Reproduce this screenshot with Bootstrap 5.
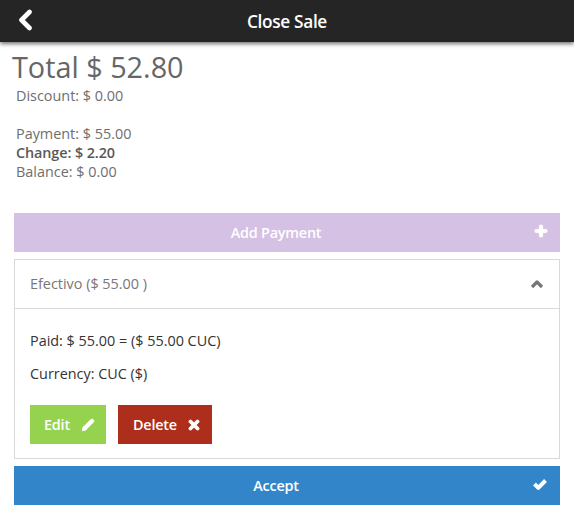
<!DOCTYPE html>
<html lang="en">
<head>
<meta charset="utf-8">
<title>Close Sale</title>
<link rel="stylesheet" href="https://cdn.jsdelivr.net/npm/bootstrap@5.3.0/dist/css/bootstrap.min.css">
<style>
html,body{height:512px;overflow:hidden}
body{font-family:"Open Sans","Noto Sans",sans-serif;font-size:14.4px;line-height:19px;color:#333;background:#fff}
.topbar{height:42px;background:#252525;color:#fff;box-shadow:0 2px 4px rgba(0,0,0,.55);position:relative}
.topbar-title{font-size:17.3px;font-weight:600;line-height:44px;letter-spacing:-.35px}
.back-ico{position:absolute;left:17px;top:9px}
.content{padding:0 14px}
.total-line{font-size:28.8px;line-height:38px;color:#666;margin:6px 0 0 -2px;font-weight:400}
.sum-lines{color:#6e6e6e;padding-left:2px;height:127px}
.sum-lines strong{font-weight:600;color:#595959;letter-spacing:-.1px}
.gap-line{height:19px}
.bar-btn{height:39px;border:0;border-radius:0;color:#fff;font-size:14.4px;font-weight:600;letter-spacing:-.2px;position:relative;display:flex;align-items:center;justify-content:center;width:100%;padding:0 22px 0 0}
.bar-btn:hover,.bar-btn:active{color:#fff}
.bar-add{background:#d5c1e4}
.bar-accept{background:#3385ca;margin-top:7px}
.bar-ico{position:absolute;right:12px;top:11px}
.pay-panel{border:1px solid #d9d9d9;margin-top:7px;height:200px}
.pay-head{height:49px;border-bottom:1px solid #d9d9d9;padding:0 15px 1px;color:#777;display:flex;align-items:center;justify-content:space-between}
.pay-body{padding:22px 15px 0;color:#333}
.pay-body p{margin:0 0 14px}
.act-btn{height:39px;border:0;border-radius:0;color:#fff;font-size:14.4px;font-weight:600;letter-spacing:-.2px;display:inline-flex;align-items:center;gap:11px}
.act-edit{background:#95d34f;width:76px;padding:0 0 0 14px}
.act-del{background:#ad2e1a;width:94px;padding:0 0 0 15px}
.act-row{margin-top:22px;gap:12px}
</style>
</head>
<body>
<div class="topbar text-center">
  <svg class="back-ico" width="17" height="22" viewBox="0 0 17 22"><path d="M12.5 3 4.5 11l8 8" fill="none" stroke="#fff" stroke-width="4.6" stroke-linecap="round" stroke-linejoin="round"/></svg>
  <div class="topbar-title">Close Sale</div>
</div>
<div class="content">
  <div class="total-line">Total $ 52.80</div>
  <div class="sum-lines">
    <div>Discount: $ 0.00</div>
    <div class="gap-line"></div>
    <div>Payment: $ 55.00</div>
    <div><strong>Change: $ 2.20</strong></div>
    <div>Balance: $ 0.00</div>
  </div>
  <button type="button" class="btn bar-btn bar-add">Add Payment
    <svg class="bar-ico" width="14" height="14" viewBox="0 0 14 14"><path d="M7 2.5v9M2.5 7h9" stroke="#fff" stroke-width="4.2" stroke-linecap="round"/></svg>
  </button>
  <div class="pay-panel">
    <div class="pay-head"><span>Efectivo ($ 55.00 )</span>
      <svg width="14" height="10" viewBox="0 0 14 10"><path d="M2 8l5-5 5 5" fill="none" stroke="#777" stroke-width="3.2" stroke-linejoin="round"/></svg>
    </div>
    <div class="pay-body">
      <p>Paid: $ 55.00 = ($ 55.00 CUC)</p>
      <p>Currency: CUC ($)</p>
      <div class="d-flex act-row">
        <button type="button" class="btn act-btn act-edit">Edit
          <svg width="14" height="14" viewBox="0 0 14 14"><path d="M3.5 10.5 11 3" stroke="#fff" stroke-width="4.4" stroke-linecap="round"/><path d="M0.8 13.2 2.2 8 6 11.8Z" fill="#fff"/></svg>
        </button>
        <button type="button" class="btn act-btn act-del">Delete
          <svg width="12" height="12" viewBox="0 0 12 12"><path d="M2.5 2.5l7 7M9.5 2.5l-7 7" stroke="#fff" stroke-width="3.8" stroke-linecap="round"/></svg>
        </button>
      </div>
    </div>
  </div>
  <button type="button" class="btn bar-btn bar-accept">Accept
    <svg class="bar-ico" width="16" height="14" viewBox="0 0 16 14"><path d="M2.5 7l3.8 3.8L13.5 3.5" fill="none" stroke="#fff" stroke-width="4" stroke-linejoin="round"/></svg>
  </button>
</div>
<script src="https://cdn.jsdelivr.net/npm/bootstrap@5.3.0/dist/js/bootstrap.bundle.min.js"></script>
</body>
</html>
